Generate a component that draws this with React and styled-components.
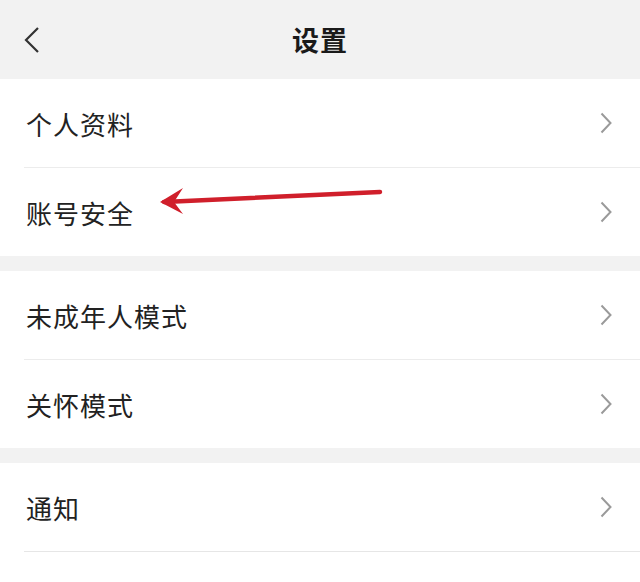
import React from "react";
import styled, { createGlobalStyle } from "styled-components";

const GlobalStyle = createGlobalStyle`
  html, body {
    margin: 0;
    padding: 0;
    background: #f2f2f2;
    font-family: "Noto Sans CJK SC", "Noto Sans", sans-serif;
  }
`;

const Page = styled.div`
  position: relative;
  width: 640px;
  height: 582px;
  overflow: hidden;
  background: #f2f2f2;
`;

const Header = styled.div`
  height: 79px;
  display: flex;
  align-items: center;
  justify-content: center;
  position: relative;
  background: #f2f2f2;
`;

const BackButton = styled.div`
  position: absolute;
  left: 20px;
  top: 25px;
  width: 24px;
  height: 30px;
`;

const Title = styled.h1`
  margin: 0;
  font-size: 27px;
  font-weight: 700;
  color: #1a1a1a;
  letter-spacing: 1px;
`;

const Section = styled.div`
  background: #fff;
  margin-bottom: ${(p) => (p.$gap ? "15px" : "0")};
`;

const Row = styled.div`
  height: 88px;
  display: flex;
  align-items: center;
  justify-content: space-between;
  margin-left: 24px;
  padding-right: 28px;
  border-top: ${(p) => (p.$divider ? "1px solid #ececec" : "none")};
  border-bottom: ${(p) => (p.$bottom ? "1px solid #e6e6e6" : "none")};
`;

const Label = styled.span`
  font-size: 26px;
  color: #222;
  margin-left: 2px;
  letter-spacing: 1px;
`;

const Arrow = styled.svg`
  position: absolute;
  left: 150px;
  top: 180px;
  overflow: visible;
`;

function Chevron() {
  return (
    <svg width="12" height="22" viewBox="0 0 12 22">
      <path d="M1.5 1.5 L10.5 11 L1.5 20.5" fill="none" stroke="#9a9a9a" strokeWidth="2" />
    </svg>
  );
}

function Item({ label, divider, bottom }) {
  return (
    <Row $divider={divider} $bottom={bottom}>
      <Label>{label}</Label>
      <Chevron />
    </Row>
  );
}

export default function App() {
  return (
    <Page>
      <GlobalStyle />
      <Header>
        <BackButton>
          <svg width="24" height="30" viewBox="0 0 24 30">
            <path d="M18 3 L6 15 L18 27" fill="none" stroke="#333" strokeWidth="2.2" />
          </svg>
        </BackButton>
        <Title>设置</Title>
      </Header>
      <Section $gap>
        <Item label="个人资料" />
        <Item label="账号安全" divider />
      </Section>
      <Section $gap>
        <Item label="未成年人模式" />
        <Item label="关怀模式" divider />
      </Section>
      <Section>
        <Item label="通知" bottom />
        <Row />
      </Section>
      <Arrow width="240" height="40" viewBox="0 0 240 40">
        <path d="M14 22 L230 12" stroke="#d01f2b" strokeWidth="4.5" strokeLinecap="round" fill="none" />
        <path d="M10 22 L33 8 L24 22 L33 34 Z" fill="#d01f2b" />
      </Arrow>
    </Page>
  );
}
